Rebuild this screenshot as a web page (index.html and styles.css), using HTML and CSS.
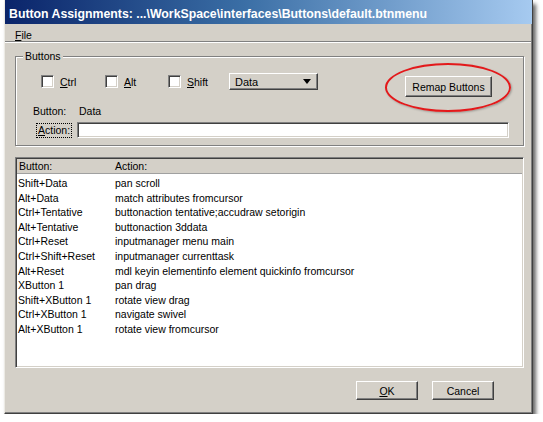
FILE: index.html
```html
<!DOCTYPE html>
<html>
<head>
<meta charset="utf-8">
<link rel="stylesheet" href="styles.css">
</head>
<body>
<div class="window">
  <div class="titlebar">Button Assignments: ...\WorkSpace\interfaces\Buttons\default.btnmenu</div>
  <div class="menubar"><span><u>F</u>ile</span></div>
  <div class="menusep"></div>
  <div class="content">
    <div class="group">
      <span class="legend">Buttons</span>
      <div class="row1">
        <label class="chk chk-ctrl"><span class="box"></span><span class="lbl"><u>C</u>trl</span></label>
        <label class="chk chk-alt"><span class="box"></span><span class="lbl"><u>A</u>lt</span></label>
        <label class="chk chk-shift"><span class="box"></span><span class="lbl"><u>S</u>hift</span></label>
        <div class="combo"><span class="combo-text">Data</span><span class="arrow"></span></div>
        <div class="remap-wrap">
          <div class="btn remap">Remap Buttons</div>
          <span class="ellipse"></span>
        </div>
      </div>
      <div class="row2"><span class="blabel">Button:</span><span>Data</span></div>
      <div class="row3"><span class="alabel"><u>A</u>ction:</span><div class="input"></div></div>
    </div>
    <div class="list">
      <div class="list-head"><span class="c1">Button:</span><span class="c2">Action:</span></div>
      <div class="list-body">
        <div class="lrow"><span class="c1">Shift+Data</span><span class="c2">pan scroll</span></div>
        <div class="lrow"><span class="c1">Alt+Data</span><span class="c2">match attributes fromcursor</span></div>
        <div class="lrow"><span class="c1">Ctrl+Tentative</span><span class="c2">buttonaction tentative;accudraw setorigin</span></div>
        <div class="lrow"><span class="c1">Alt+Tentative</span><span class="c2">buttonaction 3ddata</span></div>
        <div class="lrow"><span class="c1">Ctrl+Reset</span><span class="c2">inputmanager menu main</span></div>
        <div class="lrow"><span class="c1">Ctrl+Shift+Reset</span><span class="c2">inputmanager currenttask</span></div>
        <div class="lrow"><span class="c1">Alt+Reset</span><span class="c2">mdl keyin elementinfo element quickinfo fromcursor</span></div>
        <div class="lrow"><span class="c1">XButton 1</span><span class="c2">pan drag</span></div>
        <div class="lrow"><span class="c1">Shift+XButton 1</span><span class="c2">rotate view drag</span></div>
        <div class="lrow"><span class="c1">Ctrl+XButton 1</span><span class="c2">navigate swivel</span></div>
        <div class="lrow"><span class="c1">Alt+XButton 1</span><span class="c2">rotate view fromcursor</span></div>
      </div>
    </div>
    <div class="footer">
      <div class="btn ok"><u>O</u>K</div>
      <div class="btn cancel">Cancel</div>
    </div>
  </div>
</div>
</body>
</html>
```
FILE: styles.css
```css
* { box-sizing: border-box; }
html, body { margin: 0; padding: 0; background: #fff; }
body {
  font-family: "Liberation Sans", Arial, sans-serif;
  font-size: 10.5px;
  color: #000;
}
u { text-decoration: underline; text-underline-offset: 1px; }

.window {
  margin-left: 4px;
  width: 529px;
  height: 414px;
  background: #d4d0c8;
  border-left: 1px solid #eceae4;
  border-right: 1px solid #404040;
  border-bottom: 1px solid #404040;
  box-shadow: inset -1px -1px 0 #808080, 3px 4px 4px rgba(0,0,0,0.6);
  display: flex;
  flex-direction: column;
}

.titlebar {
  height: 24px;
  background: linear-gradient(to right, #0a246a 0%, #3a6ea5 45%, #a6caf0 100%);
  color: #fff;
  font-weight: bold;
  font-size: 12.3px;
  line-height: 14px;
  padding: 7px 0 0 4px;
  white-space: nowrap;
  overflow: hidden;
}

.menubar {
  height: 17px;
  padding: 5px 0 0 10px;
  line-height: 12px;
}
.menusep {
  height: 2px;
  border-top: 1px solid #808080;
  border-bottom: 1px solid #fff;
  margin-right: 1px;
}

.content {
  padding: 0 8px 0 10px;
  display: flex;
  flex-direction: column;
}

.group {
  position: relative;
  margin-top: 13px;
  height: 90px;
  border: 1px solid #808080;
  box-shadow: 1px 1px 0 #fff, inset 1px 1px 0 #fff;
  padding: 16px 0 0 0;
}
.legend {
  position: absolute;
  top: -7px;
  left: 7px;
  padding: 0 2px;
  background: #d4d0c8;
  line-height: 13px;
}

.row1 {
  display: flex;
  align-items: flex-start;
  padding-left: 25px;
  padding-right: 31px;
}
.chk {
  display: flex;
  align-items: center;
  height: 17px;
}
.chk-ctrl { width: 64px; }
.chk-alt { width: 63px; }
.chk-shift { width: 61px; }
.box {
  width: 13px;
  height: 13px;
  background: #fff;
  border-top: 1px solid #808080;
  border-left: 1px solid #808080;
  border-right: 1px solid #fff;
  border-bottom: 1px solid #fff;
  box-shadow: inset 1px 1px 0 #404040, inset -1px -1px 0 #d4d0c8;
}
.lbl { margin-left: 6px; }

.combo {
  width: 89px;
  height: 17px;
  display: flex;
  align-items: center;
  justify-content: space-between;
  padding: 0 5px 0 5px;
  border: 1px solid;
  border-color: #fff #404040 #404040 #fff;
  box-shadow: inset -1px -1px 0 #808080;
  font-size: 11px;
}
.arrow {
  width: 0;
  height: 0;
  border-left: 4px solid transparent;
  border-right: 4px solid transparent;
  border-top: 5px solid #000;
  margin-right: 1px;
}

.remap-wrap {
  position: relative;
  margin-left: auto;
  margin-top: 3px;
}
.btn {
  display: flex;
  align-items: center;
  justify-content: center;
  border: 1px solid;
  border-color: #fff #404040 #404040 #fff;
  box-shadow: inset -1px -1px 0 #808080;
  background: #d4d0c8;
}
.remap {
  width: 87px;
  height: 21px;
}
.ellipse {
  position: absolute;
  left: -20px;
  top: -13px;
  width: 126px;
  height: 49px;
  border: 2px solid #e3191b;
  border-radius: 50%;
  box-shadow: 1px 1px 2px rgba(0,0,0,0.25);
  pointer-events: none;
}

.row2 {
  display: flex;
  margin-top: 7px;
  padding-left: 17px;
  line-height: 14px;
}
.blabel { width: 46px; }

.row3 {
  display: flex;
  align-items: center;
  margin-top: 4px;
  padding-left: 20px;
}
.alabel {
  width: 36px;
  height: 15px;
  line-height: 13px;
  padding-left: 1px;
  border: 1px dotted #000;
}
.input {
  margin-left: 5px;
  width: 432px;
  height: 16px;
  background: #fff;
  border-top: 1px solid #808080;
  border-left: 1px solid #808080;
  border-right: 1px solid #fff;
  border-bottom: 1px solid #fff;
  box-shadow: inset 1px 1px 0 #404040, inset -1px -1px 0 #d4d0c8;
}

.list {
  margin-top: 11px;
  width: 509px;
  height: 211px;
  background: #fff;
  border-top: 1px solid #808080;
  border-left: 1px solid #808080;
  border-right: 1px solid #fff;
  border-bottom: 1px solid #fff;
  box-shadow: inset 1px 1px 0 #404040, inset -1px -1px 0 #d4d0c8;
  padding: 1px 1px 1px 1px;
  display: flex;
  flex-direction: column;
}
.list-head {
  display: flex;
  height: 15px;
  background: #d4d0c8;
  border-bottom: 1px solid #a0a0a0;
  line-height: 14px;
  padding-left: 2px;
}
.list-body {
  padding-top: 2px;
}
.lrow {
  display: flex;
  height: 14.6px;
  line-height: 14.6px;
  padding-left: 1px;
}
.c1 { width: 97px; }
.list-head .c1 { width: 96px; }

.footer {
  display: flex;
  justify-content: flex-end;
  gap: 14px;
  margin-top: 13px;
  padding-right: 30px;
}
.ok, .cancel {
  width: 62px;
  height: 19px;
}
```
